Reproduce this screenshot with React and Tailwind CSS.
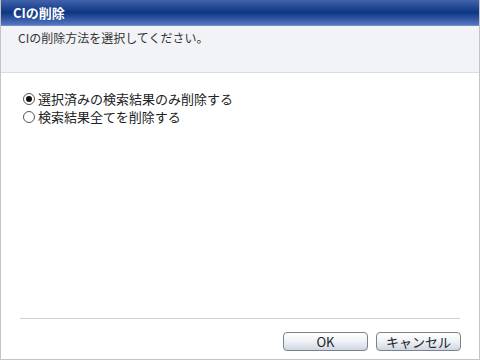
import React, { useState } from "react";

const Radio = ({ checked, label, onClick }) => (
  <label className="flex items-center gap-[3px] cursor-pointer" onClick={onClick}>
    <span className="w-[12px] h-[12px] rounded-full border border-[#555] bg-white flex items-center justify-center">
      {checked && <span className="w-[6px] h-[6px] rounded-full bg-[#111]" />}
    </span>
    <span>{label}</span>
  </label>
);

const Btn = ({ children }) => (
  <button className="w-[85px] h-[19px] rounded-[4px] border border-[#7d8289] bg-gradient-to-b from-[#ffffff] via-[#eef1f6] to-[#cfd6e2] text-[13px] leading-none text-[#222]">
    {children}
  </button>
);

export default function App() {
  const [sel, setSel] = useState(0);
  return (
    <div
      className="w-[480px] h-[360px] flex flex-col bg-white border-x border-b border-[#c4c4c4] text-[#333]"
      style={{ fontFamily: '"Noto Sans CJK JP", "Liberation Sans", sans-serif' }}
    >
      <div className="h-[26px] shrink-0 flex items-center pl-[12px] text-white font-bold text-[13px] bg-gradient-to-b from-[#4163ac] via-[#0d3682] to-[#5576c0] border-b border-[#6e8bc9]">
        CIの削除
      </div>
      <div className="h-[47px] shrink-0 bg-[#f2f3f7] border-b border-[#d9dde4] pl-[17px] pt-[3px] text-[12px] leading-[18px]">
        CIの削除方法を選択してください。
      </div>
      <div className="flex-1 flex flex-col pt-[17px] pl-[22px] text-[13px] leading-[18px] text-[#222]">
        <Radio checked={sel === 0} label="選択済みの検索結果のみ削除する" onClick={() => setSel(0)} />
        <Radio checked={sel === 1} label="検索結果全てを削除する" onClick={() => setSel(1)} />
      </div>
      <div className="mx-[19px] border-t border-[#c9d1d9]" />
      <div className="h-[40px] shrink-0 flex justify-end items-start pt-[13px] pr-[18px] gap-[8px]">
        <Btn>OK</Btn>
        <Btn>キャンセル</Btn>
      </div>
    </div>
  );
}
